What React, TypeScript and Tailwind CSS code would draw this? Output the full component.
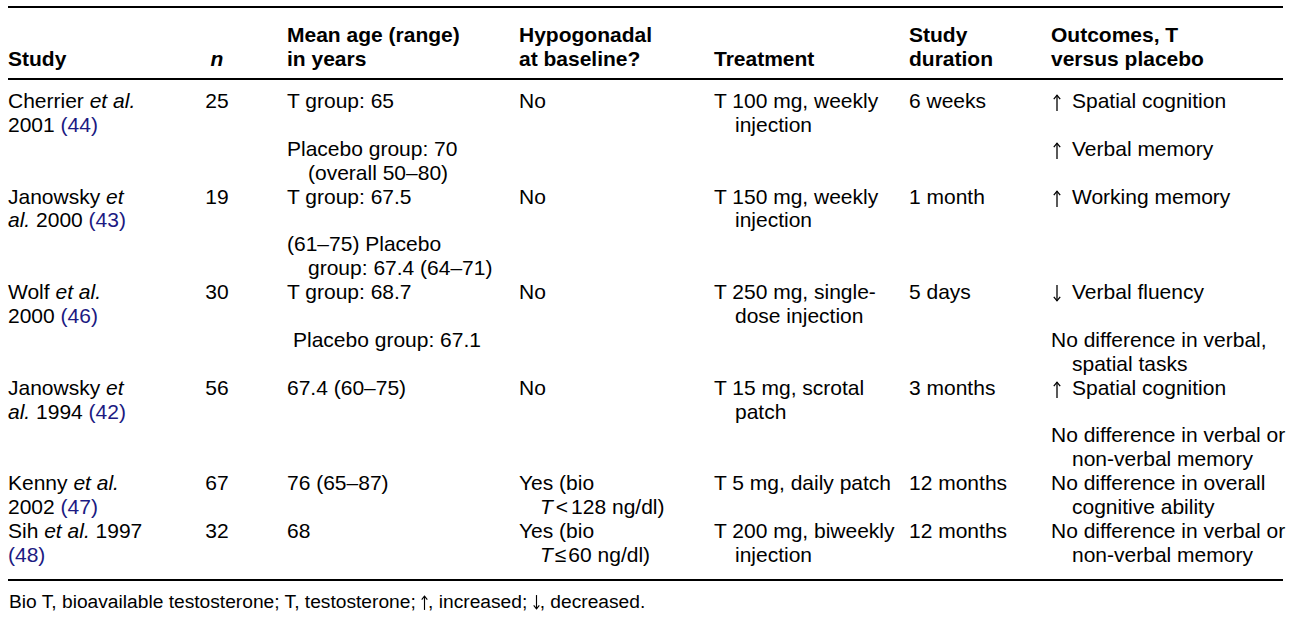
import React from 'react'

type Ln = { text?: React.ReactNode; indent?: boolean; pad?: boolean }

// one line of a cell; an empty line keeps the blank row between entries
const Line: React.FC<Ln> = ({ text, indent, pad }) => (
  <div
    className={`h-[23.9px] leading-[23.9px] whitespace-nowrap ${indent ? 'pl-[21px]' : ''} ${pad ? 'pl-[6px]' : ''}`}
  >
    {text ?? '\u00a0'}
  </div>
)

const Ref: React.FC<{ n: number }> = ({ n }) => <span className="text-[#1c1a82]">({n})</span>

// thin typeset arrow, drawn so it does not depend on a font having the glyph
const Arrow: React.FC<{ down?: boolean; className?: string }> = ({ down, className }) => (
  <svg
    viewBox="0 0 8 17"
    className={className}
    fill="none"
    stroke="currentColor"
    strokeWidth="1.3"
    aria-hidden="true"
    style={down ? { transform: 'scaleY(-1)' } : undefined}
  >
    <path d="M4 1.2V17" />
    <path d="M0.8 5.2L4 1.2L7.2 5.2" />
  </svg>
)

const Up = () => (
  <span className="inline-flex w-[21px] align-[-3px]">
    <Arrow className="ml-[2px] h-[17px] w-[8px]" />
  </span>
)
const Down = () => (
  <span className="inline-flex w-[21px] align-[-3px]">
    <Arrow down className="ml-[2px] h-[17px] w-[8px]" />
  </span>
)

const blank: Ln = {}

type Row = {
  study: Ln[]
  n: string
  age: Ln[]
  hypo: Ln[]
  treat: Ln[]
  dur: Ln[]
  out: Ln[]
}

const rows: Row[] = [
  {
    study: [
      { text: <>Cherrier <i>et al.</i></> },
      { text: <>2001 <Ref n={44} /></> },
    ],
    n: '25',
    age: [{ text: 'T group: 65' }, blank, { text: 'Placebo group: 70' }, { text: '(overall 50–80)', indent: true }],
    hypo: [{ text: 'No' }],
    treat: [{ text: 'T 100 mg, weekly' }, { text: 'injection', indent: true }],
    dur: [{ text: '6 weeks' }],
    out: [
      { text: <><Up />Spatial cognition</> },
      blank,
      { text: <><Up />Verbal memory</> },
    ],
  },
  {
    study: [
      { text: <>Janowsky <i>et</i></> },
      { text: <><i>al.</i> 2000 <Ref n={43} /></> },
    ],
    n: '19',
    age: [{ text: 'T group: 67.5' }, blank, { text: '(61–75) Placebo' }, { text: 'group: 67.4 (64–71)', indent: true }],
    hypo: [{ text: 'No' }],
    treat: [{ text: 'T 150 mg, weekly' }, { text: 'injection', indent: true }],
    dur: [{ text: '1 month' }],
    out: [{ text: <><Up />Working memory</> }],
  },
  {
    study: [
      { text: <>Wolf <i>et al.</i></> },
      { text: <>2000 <Ref n={46} /></> },
    ],
    n: '30',
    age: [{ text: 'T group: 68.7' }, blank, { text: 'Placebo group: 67.1', pad: true }],
    hypo: [{ text: 'No' }],
    treat: [{ text: 'T 250 mg, single-' }, { text: 'dose injection', indent: true }],
    dur: [{ text: '5 days' }],
    out: [
      { text: <><Down />Verbal fluency</> },
      blank,
      { text: 'No difference in verbal,' },
      { text: 'spatial tasks', indent: true },
    ],
  },
  {
    study: [
      { text: <>Janowsky <i>et</i></> },
      { text: <><i>al.</i> 1994 <Ref n={42} /></> },
    ],
    n: '56',
    age: [{ text: '67.4 (60–75)' }],
    hypo: [{ text: 'No' }],
    treat: [{ text: 'T 15 mg, scrotal' }, { text: 'patch', indent: true }],
    dur: [{ text: '3 months' }],
    out: [
      { text: <><Up />Spatial cognition</> },
      blank,
      { text: 'No difference in verbal or' },
      { text: 'non-verbal memory', indent: true },
    ],
  },
  {
    study: [
      { text: <>Kenny <i>et al.</i></> },
      { text: <>2002 <Ref n={47} /></> },
    ],
    n: '67',
    age: [{ text: '76 (65–87)' }],
    hypo: [{ text: 'Yes (bio' }, { text: <><i>T</i><span className="mx-[3px]">&lt;</span>128 ng/dl)</>, indent: true }],
    treat: [{ text: 'T 5 mg, daily patch' }],
    dur: [{ text: '12 months' }],
    out: [{ text: 'No difference in overall' }, { text: 'cognitive ability', indent: true }],
  },
  {
    study: [
      { text: <>Sih <i>et al.</i> 1997</> },
      { text: <Ref n={48} /> },
    ],
    n: '32',
    age: [{ text: '68' }],
    hypo: [{ text: 'Yes (bio' }, { text: <><i>T</i><span className="mx-[2px]">≤</span>60 ng/dl)</>, indent: true }],
    treat: [{ text: 'T 200 mg, biweekly' }, { text: 'injection', indent: true }],
    dur: [{ text: '12 months' }],
    out: [{ text: 'No difference in verbal or' }, { text: 'non-verbal memory', indent: true }],
  },
]

const Cell: React.FC<{ lines: Ln[]; className?: string }> = ({ lines, className }) => (
  <div className={className}>
    {lines.map((l, i) => (
      <Line key={i} {...l} />
    ))}
  </div>
)

const cols = 'grid grid-cols-[174px_70px_267px_195px_195px_142px_232px]'

export default function App() {
  return (
    <div
      className="min-h-screen bg-white pt-[6px] pl-[8px] text-black"
      style={{ fontFamily: '"Liberation Sans", Arial, sans-serif' }}
    >
      <div className="w-[1275px] text-[21px]">
        {/* header */}
        <div className={`${cols} items-end border-t-2 border-b-2 border-black pt-[15.4px] pb-[6.8px] font-bold`}>
          <Cell lines={[{ text: 'Study' }]} />
          <Cell lines={[{ text: <i>n</i> }]} className="text-center" />
          <Cell lines={[{ text: 'Mean age (range)' }, { text: 'in years' }]} className="pl-[35px]" />
          <Cell lines={[{ text: 'Hypogonadal' }, { text: 'at baseline?' }]} />
          <Cell lines={[{ text: 'Treatment' }]} />
          <Cell lines={[{ text: 'Study' }, { text: 'duration' }]} />
          <Cell lines={[{ text: 'Outcomes, T' }, { text: 'versus placebo' }]} />
        </div>

        {/* body */}
        <div className="border-b-2 border-black pt-[9px] pb-[12px]">
          {rows.map((r, i) => (
            <div key={i} className={`${cols} items-start`}>
              <Cell lines={r.study} />
              <Cell lines={[{ text: r.n }]} className="text-center" />
              <Cell lines={r.age} className="pl-[35px]" />
              <Cell lines={r.hypo} />
              <Cell lines={r.treat} />
              <Cell lines={r.dur} />
              <Cell lines={r.out} />
            </div>
          ))}
        </div>
      </div>

      {/* footnote */}
      <p className="pt-[10px] pl-[1px] text-[19.2px] leading-[22px]">
        Bio T, bioavailable testosterone; T, testosterone;{' '}
        <Arrow className="inline h-[15px] w-[7px] align-[-2px]" />, increased;{' '}
        <Arrow down className="inline h-[15px] w-[7px] align-[-2px]" />, decreased.
      </p>
    </div>
  )
}
